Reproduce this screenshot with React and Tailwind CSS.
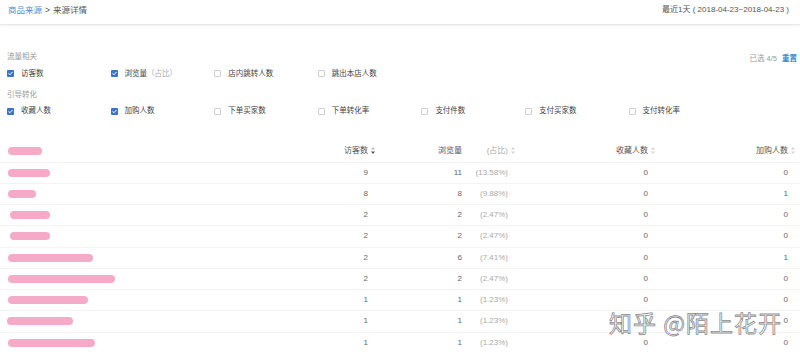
import React from "react";

const font = "font-['Liberation_Sans','Noto_Sans_CJK_SC',sans-serif]";

const groups = [
  {
    title: "流量相关",
    items: [
      { label: "访客数", checked: true },
      { label: "浏览量", note: "（占比）", checked: true },
      { label: "店内跳转人数" },
      { label: "跳出本店人数" },
    ],
  },
  {
    title: "引导转化",
    items: [
      { label: "收藏人数", checked: true },
      { label: "加购人数", checked: true },
      { label: "下单买家数" },
      { label: "下单转化率" },
      { label: "支付件数" },
      { label: "支付买家数" },
      { label: "支付转化率" },
    ],
  },
];

// 名称列已被打码，用粉色色块代替
const rows = [
  { uv: 9, pv: 11, pct: "13.58%", fav: 0, cart: 0, blur: "ml-0 w-[42px]" },
  { uv: 8, pv: 8, pct: "9.88%", fav: 0, cart: 1, blur: "ml-0 w-[28px]" },
  { uv: 2, pv: 2, pct: "2.47%", fav: 0, cart: 0, blur: "ml-[2px] w-[40px]" },
  { uv: 2, pv: 2, pct: "2.47%", fav: 0, cart: 0, blur: "ml-[2px] w-[40px]" },
  { uv: 2, pv: 6, pct: "7.41%", fav: 0, cart: 1, blur: "ml-0 w-[85px]" },
  { uv: 2, pv: 2, pct: "2.47%", fav: 0, cart: 0, blur: "ml-0 w-[107px]" },
  { uv: 1, pv: 1, pct: "1.23%", fav: 0, cart: 0, blur: "ml-0 w-[80px]" },
  { uv: 1, pv: 1, pct: "1.23%", fav: 0, cart: 0, blur: "ml-[-1px] w-[66px]" },
  { uv: 1, pv: 1, pct: "1.23%", fav: 0, cart: 0, blur: "ml-0 w-[87px]" },
];

const Checkbox = ({ checked }) =>
  checked ? (
    <span className="w-[7px] h-[7px] rounded-[1px] bg-[#3c74c2] flex items-center justify-center">
      <svg width="5" height="5" viewBox="0 0 10 10" fill="none">
        <path d="M1.5 5.2L4 7.5L8.5 2.5" stroke="white" strokeWidth="2" strokeLinecap="round" strokeLinejoin="round" />
      </svg>
    </span>
  ) : (
    <span className="w-[7px] h-[7px] rounded-[1px] border border-[#cfcfcf] bg-white" />
  );

const SortIcon = ({ active }) => (
  <span className="w-[7px] flex justify-end">
    <svg width="4" height="7" viewBox="0 0 4 7">
      <path d="M2 0L4 2.6H0Z" fill={active ? "#b5b5b5" : "#d4d4d4"} />
      <path d="M2 7L4 4.4H0Z" fill={active ? "#555" : "#d4d4d4"} />
    </svg>
  </span>
);

const Blur = ({ cls }) => (
  <div className={`h-[8px] rounded-full bg-[#f5abc8] blur-[0.7px] ${cls}`} />
);

const Spacer = () => <span className="w-[7px]" />;

export default function App() {
  return (
    <div className={`relative w-[800px] h-[354px] overflow-hidden bg-white ${font}`}>
      {/* 顶部面包屑 */}
      <div className="h-[25px] flex items-start justify-between px-[8px] pt-[4px] border-b border-[#e8e8e8] shadow-[0_1px_3px_rgba(0,0,0,0.06)]">
        <div className="text-[8.5px] leading-[12px] text-[#555]">
          <span className="text-[#4a8fd8]">商品来源</span>
          <span className="mx-[3px]">&gt;</span>
          <span>来源详情</span>
        </div>
        <div className="text-[8px] leading-[12px] text-[#555] pr-[3px]">
          最近1天 ( 2018-04-23~2018-04-23 )
        </div>
      </div>

      {/* 指标选择 */}
      <div className="pt-[24px] px-[7px]">
        {groups.map((g, gi) => (
          <div key={g.title} className={gi > 0 ? "mt-[4.6px]" : ""}>
            <div className="h-[16px] flex items-center justify-between">
              <span className="text-[7.5px] text-[#9a9a9a]">{g.title}</span>
              {gi === 0 && (
                <span className="text-[7.5px] text-[#999] mt-[4px] mr-[-4px]">
                  已选 4/5 <span className="ml-[3px] text-[#3b7fcf] font-bold">重置</span>
                </span>
              )}
            </div>
            <div className="h-[17px] flex items-center">
              {g.items.map((it) => (
                <div key={it.label} className="w-[103.6px] flex items-center gap-[7px]">
                  <Checkbox checked={it.checked} />
                  <span className="text-[7.5px] text-[#444]">
                    {it.label}
                    {it.note && <span className="text-[#aaa]">{it.note}</span>}
                  </span>
                </div>
              ))}
            </div>
          </div>
        ))}
      </div>

      {/* 表格 */}
      <div className="mt-[20px] text-[8px]">
        <div className="h-[22px] flex items-center text-[#555]">
          <div className="w-[300px] pl-[8px]">
            <Blur cls="w-[34px]" />
          </div>
          <div className="w-[75px] flex justify-end items-center">
            访客数
            <SortIcon active />
          </div>
          <div className="w-[87px] flex justify-end items-center">浏览量</div>
          <div className="w-[53px] flex justify-end items-center text-[#aaa]">
            (占比)
            <SortIcon />
          </div>
          <div className="w-[140px] flex justify-end items-center">
            收藏人数
            <SortIcon />
          </div>
          <div className="w-[140px] flex justify-end items-center">
            加购人数
            <SortIcon />
          </div>
        </div>
        {rows.map((r, i) => (
          <div key={i} className="h-[21.25px] flex items-center border-t border-[#f3f3f3] text-[#666]">
            <div className="w-[300px] pl-[8px]">
              <Blur cls={r.blur} />
            </div>
            <div className="w-[75px] flex justify-end">
              {r.uv}
              <Spacer />
            </div>
            <div className="w-[87px] flex justify-end">{r.pv}</div>
            <div className="w-[53px] flex justify-end text-[#aaa]">
              ({r.pct})
              <Spacer />
            </div>
            <div className="w-[140px] flex justify-end">
              {r.fav}
              <Spacer />
            </div>
            <div className="w-[140px] flex justify-end">
              {r.cart}
              <Spacer />
            </div>
          </div>
        ))}
      </div>

      {/* 水印 */}
      <div className="absolute left-[609px] top-[308px] text-[23px] leading-[28px] font-['Noto_Sans_CJK_SC',sans-serif] text-white [-webkit-text-stroke:0.8px_#8c8c8c] tracking-[1px] whitespace-nowrap">
        知乎 @陌上花开
      </div>
    </div>
  );
}
